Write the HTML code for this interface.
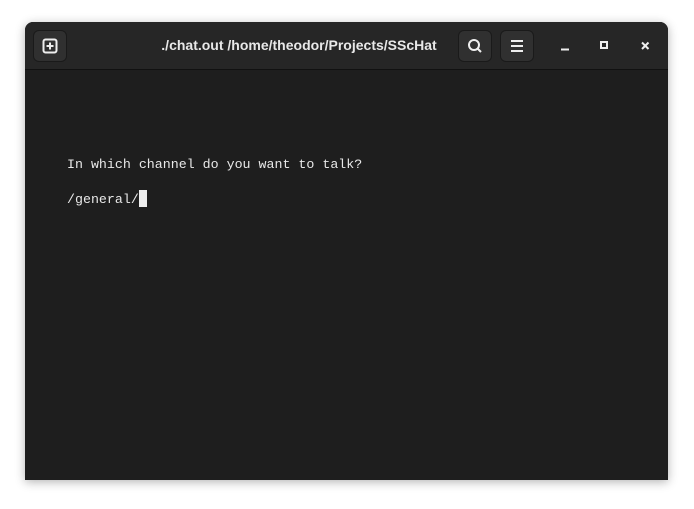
<!DOCTYPE html>
<html><head><style>
html,body{margin:0;width:694px;height:509px;background:#fff;overflow:hidden}
.win{position:absolute;left:25px;top:22px;width:643px;height:458px;background:#1e1e1e;border-radius:8px 8px 0 0;box-shadow:0 2px 10px rgba(0,0,0,.3);overflow:hidden}
.hb{position:absolute;left:0;top:0;width:643px;height:47px;background:#262626;border-bottom:1px solid #111}
.btn{position:absolute;top:8px;width:34px;height:32px;background:#303030;border-radius:6px;border:1px solid #1a1a1a;box-sizing:border-box}
.title{position:absolute;left:0;width:548px;top:15px;text-align:center;color:#e8e8e8;font:bold 14px "Liberation Sans",sans-serif}
.t{position:absolute;left:42px;color:#e8e8e8;font:13.3px "Liberation Mono",monospace;white-space:pre}
</style></head><body>
<div class="win">
<div class="hb">
<div class="btn" style="left:8px"><svg width="32" height="30" viewBox="0 0 32 30"><rect x="9.5" y="8.5" width="13" height="13" rx="2" fill="none" stroke="#eee" stroke-width="2"/><path d="M16 11.5v7M12.5 15h7" stroke="#eee" stroke-width="2"/></svg></div>
<div class="title">./chat.out /home/theodor/Projects/SScHat</div>
<div class="btn" style="left:433px"><svg width="32" height="30" viewBox="0 0 32 30"><circle cx="15" cy="14" r="5" fill="none" stroke="#eee" stroke-width="2"/><path d="M18.5 17.5l3.5 3.5" stroke="#eee" stroke-width="2"/></svg></div>
<div class="btn" style="left:475px"><svg width="32" height="30" viewBox="0 0 32 30"><path d="M10 10h12M10 15h12M10 20h12" stroke="#eee" stroke-width="2"/></svg></div>
<svg style="position:absolute;left:530px;top:15px" width="100" height="20"><path d="M6 12.5h8" stroke="#eee" stroke-width="2"/><rect x="46" y="5" width="6" height="6" fill="none" stroke="#eee" stroke-width="2"/><path d="M87 5.5l6.5 6.5M93.5 5.5l-6.5 6.5" stroke="#eee" stroke-width="2"/></svg>
</div>
<div class="t" style="top:135px">In which channel do you want to talk?</div>
<div class="t" style="top:168px">/general/<span style="display:inline-block;width:8px;height:17px;background:#eee;vertical-align:-4px"></span></div>
</div>
</body></html>
